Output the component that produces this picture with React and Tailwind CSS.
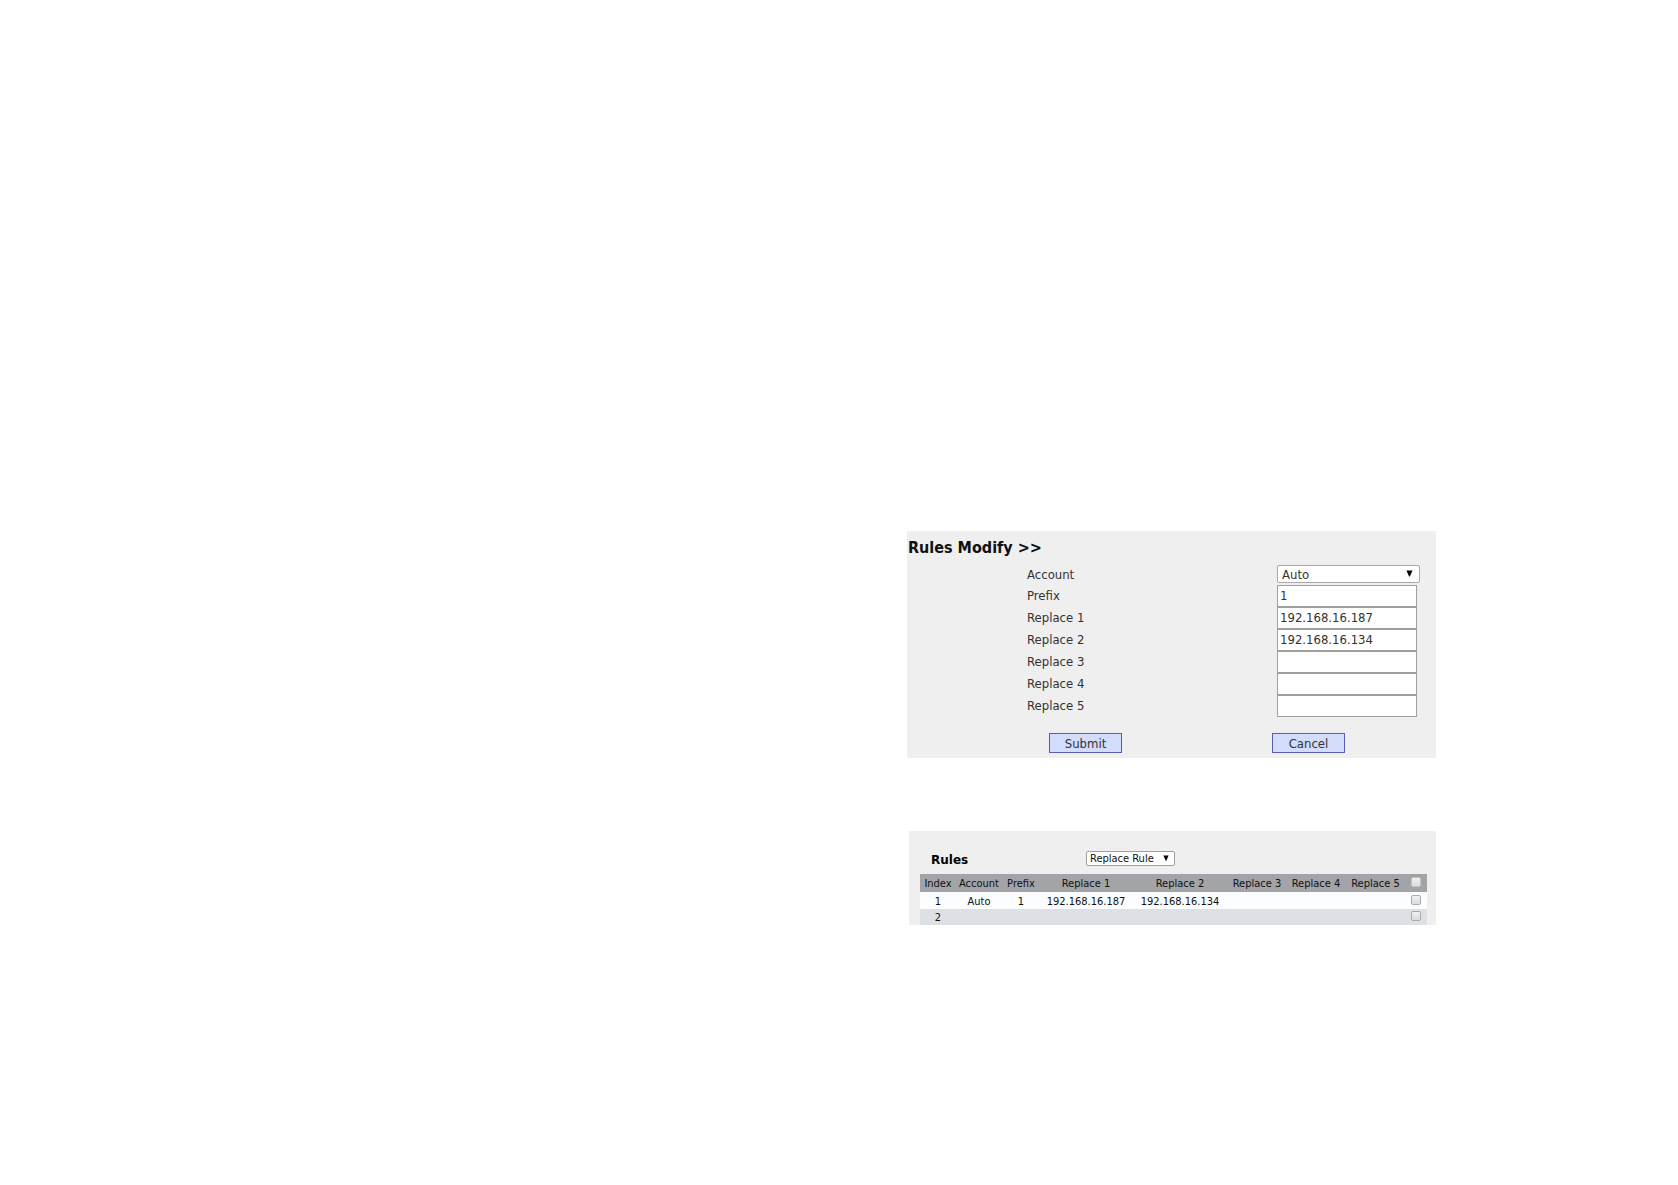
/**
 * App.jsx
 * -------------------------------------------------------
 * Dial rule pages: the "Rules Modify" form and the rule list.
 */

import React from "react";

const FIELDS = [
  { id: "prefix", label: "Prefix", value: "1" },
  { id: "replace1", label: "Replace 1", value: "192.168.16.187" },
  { id: "replace2", label: "Replace 2", value: "192.168.16.134" },
  { id: "replace3", label: "Replace 3", value: "" },
  { id: "replace4", label: "Replace 4", value: "" },
  { id: "replace5", label: "Replace 5", value: "" },
];

const COLUMNS = [
  { title: "Index", width: "w-[36px]" },
  { title: "Account", width: "w-[46px]" },
  { title: "Prefix", width: "w-[38px]" },
  { title: "Replace 1", width: "w-[92px]" },
  { title: "Replace 2", width: "w-[96px]" },
  { title: "Replace 3", width: "w-[58px]" },
  { title: "Replace 4", width: "w-[60px]" },
  { title: "Replace 5", width: "w-[59px]" },
];

const RULES = [
  ["1", "Auto", "1", "192.168.16.187", "192.168.16.134", "", "", ""],
  ["2", "", "", "", "", "", "", ""],
];

/** Small solid triangle at the right end of a drop-down */
function Arrow({ className }) {
  return (
    <svg viewBox="0 0 8 8" className={`pointer-events-none absolute ${className}`} aria-hidden="true">
      <path d="M0.5 0.5h7L4.4 7.5H3.6z" fill="#000" />
    </svg>
  );
}

function RuleCheckbox({ label, header = false }) {
  return (
    <input
      type="checkbox"
      aria-label={label}
      className={`block size-[10px] appearance-none rounded-[2px] border bg-linear-to-b from-[#f0f0f0] to-[#dcdcdc] ${
        header ? "border-[#c4c4c6]" : "border-[#a9abad]"
      }`}
    />
  );
}

function RulesModify() {
  return (
    <form className="bg-[#efefef] pb-[5px] text-[13px] text-[#333]" onSubmit={(e) => e.preventDefault()}>
      <h2 className="h-[34px] pl-px text-base leading-[34px] font-bold text-[#111]">Rules Modify &gt;&gt;</h2>

      <div className="flex h-5 pl-[120px]">
        <label htmlFor="account" className="w-[250px] leading-5">Account</label>
        <div className="relative h-[18px] w-[143px]">
          <select
            id="account"
            defaultValue="Auto"
            className="block h-full w-full appearance-none rounded-[2px] border border-[#a9a9a9] bg-white pt-px pl-1 leading-4"
          >
            <option>Auto</option>
          </select>
          <Arrow className="top-[5px] right-[7px] size-[7px]" />
        </div>
      </div>

      {FIELDS.map((field) => (
        <div key={field.id} className="flex h-[22px] pl-[120px]">
          <label htmlFor={field.id} className="w-[250px] leading-[22px]">{field.label}</label>
          <input
            id={field.id}
            type="text"
            defaultValue={field.value}
            className="h-full w-[140px] border border-[#a0a0a0] bg-white px-[2px] pb-[2px] leading-[18px]"
          />
        </div>
      ))}

      <div className="flex gap-[150px] pt-4 pl-[142px]">
        <button type="submit" className="h-5 w-[73px] border border-[#5b5bb0] bg-[#d3dcfa] pt-[2px] leading-4">Submit</button>
        <button type="button" className="h-5 w-[73px] border border-[#5b5bb0] bg-[#d3dcfa] pt-[2px] leading-4">Cancel</button>
      </div>
    </form>
  );
}

function RulesList() {
  return (
    <section className="ml-[2px] bg-[#efefef] pr-[9px] pl-[11px] text-[11px] text-[#111]">
      <div className="flex h-[43px] items-end pb-2 pl-[11px]">
        <h2 className="w-[155px] font-['DejaVu_Sans'] text-xs leading-3 font-bold text-black">Rules</h2>
        <div className="relative h-[15px] w-[89px]">
          <select
            aria-label="Rule type"
            className="block h-full w-full appearance-none rounded-[2px] border border-[#a0a0a0] bg-white pt-px pl-[3px] leading-3"
          >
            <option>Replace Rule</option>
          </select>
          <Arrow className="top-[4px] right-[6px] size-[6px]" />
        </div>
      </div>

      <table className="w-full table-fixed border-collapse text-center">
        <thead>
          <tr className="h-[18px] bg-[#a2a4a8] leading-4">
            {COLUMNS.map((column) => (
              <th key={column.title} className={`p-0 pt-[2px] font-normal whitespace-nowrap ${column.width}`}>{column.title}</th>
            ))}
            <th className="w-[22px] p-0 pb-[2px] pl-[6px]">
              <RuleCheckbox label="Select all rules" header />
            </th>
          </tr>
        </thead>
        <tbody>
          {RULES.map((rule) => (
            <tr key={rule[0]} className="h-[17px] leading-[15px] odd:bg-[#fbfdfe] even:h-4 even:bg-[#dde1e5]">
              {rule.map((cell, i) => (
                <td key={i} className="p-0 pt-px">{cell}</td>
              ))}
              <td className="p-0 pb-[2px] pl-[6px]">
                <RuleCheckbox label={`Select rule ${rule[0]}`} />
              </td>
            </tr>
          ))}
        </tbody>
      </table>
    </section>
  );
}

export default function App() {
  return (
    <main className="flex min-h-screen justify-end bg-white pt-[531px] pr-[242px] font-['DejaVu_Sans_Condensed','Noto_Sans',sans-serif]">
      <div className="flex w-[529px] max-w-full flex-col gap-[73px]">
        <RulesModify />
        <RulesList />
      </div>
    </main>
  );
}
